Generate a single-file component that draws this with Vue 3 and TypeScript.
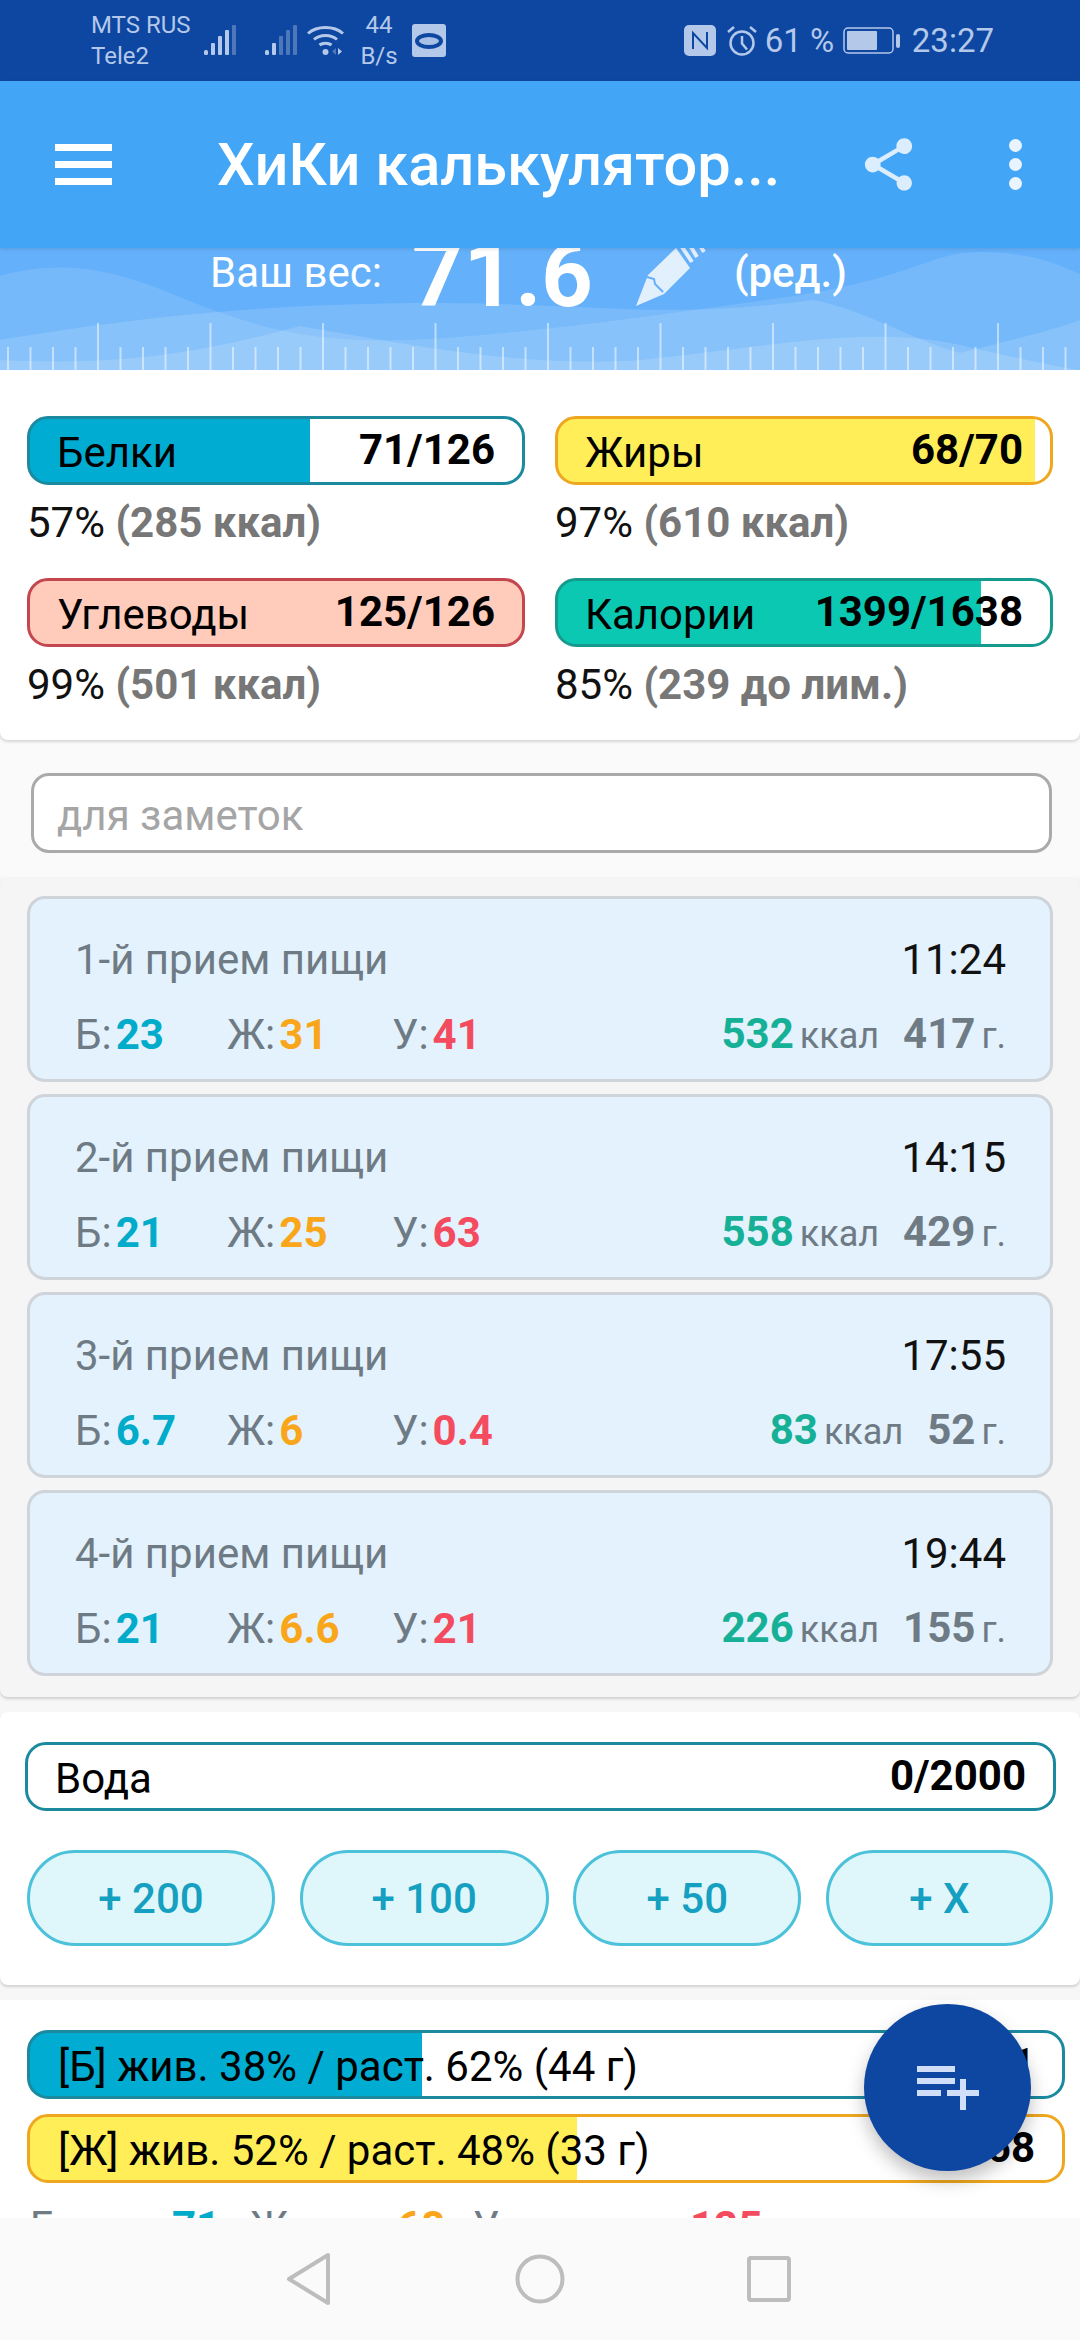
<script setup lang="ts">
interface Stat { label: string; value: string; pct: number; fill: string; border: string; note: string; detail: string }
interface Meal { title: string; time: string; b: string; f: string; c: string; kcal: string; grams: string }

const stats: Stat[] = [
  { label: 'Белки', value: '71/126', pct: 57, fill: '#00acd1', border: '#1b8a9f', note: '57%', detail: '(285 ккал)' },
  { label: 'Жиры', value: '68/70', pct: 97, fill: '#ffee58', border: '#eea71f', note: '97%', detail: '(610 ккал)' },
  { label: 'Углеводы', value: '125/126', pct: 100, fill: '#ffccbc', border: '#c4464f', note: '99%', detail: '(501 ккал)' },
  { label: 'Калории', value: '1399/1638', pct: 86, fill: '#0ac8b2', border: '#179a8e', note: '85%', detail: '(239 до лим.)' },
]
const meals: Meal[] = [
  { title: '1-й прием пищи', time: '11:24', b: '23', f: '31', c: '41', kcal: '532', grams: '417' },
  { title: '2-й прием пищи', time: '14:15', b: '21', f: '25', c: '63', kcal: '558', grams: '429' },
  { title: '3-й прием пищи', time: '17:55', b: '6.7', f: '6', c: '0.4', kcal: '83', grams: '52' },
  { title: '4-й прием пищи', time: '19:44', b: '21', f: '6.6', c: '21', kcal: '226', grams: '155' },
]
const buttons = [
  { text: '+ 200', width: 248 },
  { text: '+ 100', width: 249 },
  { text: '+ 50', width: 228 },
  { text: '+ X', width: 227 },
]
const ticks: { x: number; big: boolean }[] = []
for (let i = -4; i < 44; i++) ticks.push({ x: 98 + i * 22.5, big: ((i % 5) + 5) % 5 === 0 })

function barBg(s: { pct: number; fill: string }) {
  return `linear-gradient(to right, ${s.fill} ${s.pct}%, #fff ${s.pct}%)`
}
</script>

<template>
  <div class="page">
    <div class="status">
      <div class="carriers"><span>MTS RUS</span><span>Tele2</span></div>
      <svg class="sig" width="32" height="30" viewBox="0 0 32 30">
        <rect x="0" y="25" width="4" height="5" rx="1.5" fill="#b4c8ea"/><rect x="7" y="18" width="4" height="12" rx="1" fill="#b4c8ea"/><rect x="14" y="11" width="4" height="19" rx="1" fill="#b4c8ea"/><rect x="21" y="5" width="4" height="25" rx="1" fill="#b4c8ea"/><rect x="28" y="0" width="4" height="30" rx="1" fill="#4f78bb"/>
      </svg>
      <svg class="sig sig2" width="32" height="30" viewBox="0 0 32 30">
        <rect x="0" y="25" width="4" height="5" rx="1.5" fill="#b4c8ea"/><rect x="7" y="18" width="4" height="12" rx="1" fill="#b4c8ea"/><rect x="14" y="11" width="4" height="19" rx="1" fill="#4f78bb"/><rect x="21" y="5" width="4" height="25" rx="1" fill="#4f78bb"/><rect x="28" y="0" width="4" height="30" rx="1" fill="#4f78bb"/>
      </svg>
      <svg class="wifi" width="37" height="30" viewBox="0 0 37 30" fill="none" stroke="#b4c8ea" stroke-width="3">
        <path d="M1 8.500C10 .5 27 .5 36 8.500"/><path d="M7 14.500C13 9 24 9 30 14.500"/><path d="M12.500 20C15.500 17.500 21.500 17.500 24.500 20"/>
        <circle cx="18.500" cy="27" r="3" fill="#b4c8ea" stroke="none"/>
        <path d="M31 23v7l4-3.500z" fill="#b4c8ea" stroke="none"/><path d="M29 23v7l-4-3.500z" fill="#4f78bb" stroke="none"/>
      </svg>
      <div class="speed"><span>44</span><span>B/s</span></div>
      <svg class="eye" width="34" height="33" viewBox="0 0 34 33">
        <rect width="34" height="33" rx="3" fill="#b4c8ea"/>
        <ellipse cx="17" cy="17" rx="12" ry="6" fill="#a8bfe6" stroke="#0e47a1" stroke-width="4"/>
      </svg>
      <div class="status-right">
        <svg width="32" height="31" viewBox="0 0 32 31">
          <rect width="32" height="31" rx="5" fill="#b4c8ea"/>
          <path d="M9 24V8l14 15V7" fill="none" stroke="#0e47a1" stroke-width="2"/>
        </svg>
        <svg class="alarm" width="30" height="30" viewBox="0 0 30 30" fill="none" stroke="#b4c8ea" stroke-width="2.500">
          <circle cx="15" cy="17" r="11.500"/><path d="M15 10v7.500l5 6"/><path d="M1 6l6-5M29 6l-6-5"/>
        </svg>
        <span class="pct">61 %</span>
        <svg class="batt" width="58" height="27" viewBox="0 0 58 27">
          <rect x="1" y="1" width="49" height="25" rx="4" fill="none" stroke="#b4c8ea" stroke-width="1.500"/>
          <rect x="4" y="4" width="30" height="19" rx="1" fill="#b4c8ea"/>
          <rect x="53" y="7" width="4" height="14" rx="2" fill="#b4c8ea"/>
        </svg>
        <span class="clock">23:27</span>
      </div>
    </div>

    <div class="toolbar">
      <div class="burger"><i></i><i></i><i></i></div>
      <div class="title">ХиКи калькулятор...</div>
      <svg class="share" width="63" height="63" viewBox="0 0 24 24">
        <path fill="#dcedfd" d="M18 16.080c-.76 0-1.440.3-1.960.77L8.910 12.700c.05-.23.09-.46.09-.7s-.04-.47-.09-.7l7.050-4.110c.54.5 1.250.81 2.040.81 1.660 0 3-1.340 3-3s-1.340-3-3-3-3 1.340-3 3c0 .24.04.47.09.7L8.040 9.810C7.500 9.310 6.790 9 6 9c-1.660 0-3 1.340-3 3s1.340 3 3 3c.79 0 1.500-.31 2.040-.81l7.120 4.160c-.05.21-.08.43-.08.65 0 1.610 1.310 2.920 2.920 2.920 1.610 0 2.920-1.310 2.920-2.920s-1.310-2.920-2.920-2.920z"/>
      </svg>
      <div class="dots"><i></i><i></i><i></i></div>
    </div>

    <div class="weight">
      <svg class="waves" width="1080" height="122" viewBox="0 0 1080 122">
        <path fill="#fff" fill-opacity=".12" d="M0 28C50 14 100 16 170 45S300 95 400 92 640 70 780 50 930 2 985 4 1060 18 1080 26V122H0Z"/>
        <path fill="#fff" fill-opacity=".13" d="M0 92C120 72 260 55 430 55S660 72 813 52C860 60 920 95 960 105 1020 90 1060 80 1080 72V122H0Z"/>
        <path fill="#fff" fill-opacity=".14" d="M0 122V112C120 118 200 105 300 78 400 95 520 120 640 112 760 100 860 78 950 95 1010 108 1050 118 1080 122Z"/>
        <rect v-for="t in ticks" :key="t.x" :x="t.x - 1" :y="t.big ? 75 : 99" width="2" :height="t.big ? 47 : 23" fill="#fff" fill-opacity=".5"/>
      </svg>
      <div class="weight-row">
        <span class="w-label">Ваш вес:</span>
        <span class="w-value">71.6</span>
        <svg class="pencil" width="76" height="60" viewBox="0 0 76 60">
          <path fill="#e2effd" d="M1 59L13 28 41 1 55 21 29 47Z"/>
          <path fill="none" stroke="#64b0fa" stroke-width="2" d="M12 30l7 2 1 5 8 8"/>
          <path fill="none" stroke="#e2effd" stroke-width="4" d="M47 0l10 15M56 0l6 10M66 0l3 5"/>
        </svg>
        <span class="w-edit">(ред.)</span>
      </div>
    </div>

    <div class="content">
      <section class="summary">
        <div v-for="s in stats" :key="s.label" class="stat">
          <div class="bar" :style="{ background: barBg(s), borderColor: s.border }">
            <span class="bar-label">{{ s.label }}</span>
            <b class="bar-value">{{ s.value }}</b>
          </div>
          <div class="stat-note">{{ s.note }} <b>{{ s.detail }}</b></div>
        </div>
      </section>

      <section class="notes">
        <div class="notes-input">для заметок</div>
      </section>

      <section class="meals">
        <article v-for="m in meals" :key="m.title" class="meal">
          <div class="meal-top"><span class="meal-title">{{ m.title }}</span><span class="meal-time">{{ m.time }}</span></div>
          <div class="meal-bottom">
            <span class="macro m1">Б:<b class="c-b">{{ m.b }}</b></span>
            <span class="macro m2">Ж:<b class="c-f">{{ m.f }}</b></span>
            <span class="macro m3">У:<b class="c-c">{{ m.c }}</b></span>
            <span class="totals">
              <b class="c-k">{{ m.kcal }}</b><small>ккал</small>
              <b class="c-g">{{ m.grams }}</b><small>г.</small>
            </span>
          </div>
        </article>
      </section>

      <section class="water">
        <div class="bar water-bar"><span class="bar-label">Вода</span><b class="bar-value">0/2000</b></div>
        <div class="water-btns">
          <button v-for="b in buttons" :key="b.text" class="water-btn" :style="{ width: b.width + 'px' }">{{ b.text }}</button>
        </div>
      </section>

      <section class="ratio">
        <div class="bar wide" :style="{ background: barBg({ pct: 38, fill: '#00acd1' }), borderColor: '#1b8a9f' }">
          <span class="bar-label">[Б] жив. 38% / раст. 62% (44 г)</span><b class="bar-value">71</b>
        </div>
        <div class="bar wide" :style="{ background: barBg({ pct: 53, fill: '#ffee58' }), borderColor: '#eea71f' }">
          <span class="bar-label">[Ж] жив. 52% / раст. 48% (33 г)</span><b class="bar-value">68</b>
        </div>
        <div class="totals-row">
          <span class="tr1">Белки:</span><b class="c-b tv1">71</b>
          <span class="tr2">Жиры:</span><b class="c-f tv2">68</b>
          <span class="tr3">Углеводы:</span><b class="c-c tv3">125</b>
        </div>
      </section>
    </div>

    <div class="nav">
      <svg width="46" height="54" viewBox="0 0 46 54" fill="none" stroke="#bdbdbd" stroke-width="4" stroke-linejoin="round"><path d="M42 3v48L3 27Z"/></svg>
      <svg width="50" height="50" viewBox="0 0 50 50" fill="none" stroke="#bdbdbd" stroke-width="4"><circle cx="25" cy="25" r="22.500"/></svg>
      <svg width="44" height="46" viewBox="0 0 44 46" fill="none" stroke="#bdbdbd" stroke-width="4"><rect x="2" y="2" width="40" height="42" rx="2"/></svg>
    </div>

    <button class="fab" aria-label="add">
      <svg width="62" height="44" viewBox="0 0 62 44" fill="#d0defa">
        <rect x="0" y="0" width="38" height="6"/><rect x="0" y="12" width="38" height="6"/><rect x="0" y="24" width="24" height="6"/>
        <rect x="30" y="24" width="32" height="6"/><rect x="43" y="13" width="6" height="31"/>
      </svg>
    </button>
  </div>
</template>

<style scoped>
.page { position: relative; width: 1080px; height: 2340px; overflow: hidden; display: flex; flex-direction: column; background: #f7f7f7; font-family: Roboto, "Noto Sans", sans-serif; color: #000; }
b { font-weight: 700; }

.status { height: 81px; flex: none; background: #0e47a1; color: #b4c8ea; display: flex; align-items: center; padding-left: 91px; font-size: 24px; white-space: nowrap; }
.carriers, .speed { display: flex; flex-direction: column; line-height: 31px; }
.carriers { width: 113px; }
.sig { flex: none; margin-top: -1px; }
.sig2 { margin-left: 29px; }
.wifi { margin-left: 10px; margin-top: -1px; }
.speed { width: 32px; margin-left: 19px; align-items: center; }
.eye { margin-left: 17px; }
.status-right { margin-left: auto; padding-right: 86px; display: flex; align-items: center; }
.alarm { margin-left: 11px; }
.pct { font-size: 33px; margin-left: 8px; width: 68px; }
.batt { margin-left: 10px; }
.clock { font-size: 33px; margin-left: 11px; }

.toolbar { height: 167px; flex: none; background: #42a5f5; display: flex; align-items: center; position: relative; z-index: 2; box-shadow: 0 1px 4px rgba(0,0,0,.12); }
.burger { width: 57px; margin-left: 55px; display: flex; flex-direction: column; gap: 10px; }
.burger i { display: block; height: 7px; background: #fff; }
.title { margin-left: 105px; font-size: 59.5px; font-weight: 500; color: #fff; width: 656px; flex: none; white-space: nowrap; }
.share { margin-left: -16px; flex: none; }
.dots { margin-left: 89px; display: flex; flex-direction: column; gap: 6px; align-items: center; }
.dots i { width: 13px; height: 13px; border-radius: 50%; background: #eaf4fe; }

.weight { height: 122px; flex: none; background: #64b0fa; position: relative; overflow: hidden; }
.waves { position: absolute; left: 0; top: 0; }
.weight-row { position: relative; display: flex; align-items: flex-start; padding-left: 210px; margin-top: -19px; color: #fff; }
.w-label { font-size: 42px; line-height: 90px; flex: none; margin-top: -1px; }
.w-value { font-size: 90px; font-weight: 700; line-height: 90px; margin-left: 30px; margin-top: 2px; flex: none; }
.pencil { margin-left: 42px; margin-top: 18px; flex: none; }
.w-edit { font-size: 42px; font-weight: 500; line-height: 90px; margin-left: 23px; margin-top: -1px; flex: none; }

.content { flex: 1; min-height: 0; overflow: hidden; }
.summary { position: relative; background: #fff; height: 370px; padding: 46px 28px 0 27px; display: grid; grid-template-columns: 498px 498px; column-gap: 30px; grid-auto-rows: 162px; border-radius: 0 0 8px 8px; box-shadow: 0 2px 3px rgba(0,0,0,.14); box-sizing: border-box; }
.bar { height: 69px; box-sizing: border-box; border: 3px solid #1b8a9f; border-radius: 21px; background: #fff; display: flex; align-items: center; justify-content: space-between; padding: 0 27px; font-size: 42px; white-space: nowrap; }
.bar-label { margin-top: 4px; }
.bar-value { margin-top: -3px; }
.stat-note { margin-top: 14px; font-size: 42px; line-height: 47px; color: #111; }
.stat-note b { color: #777; }

.notes { height: 137px; padding: 33px 28px 0 31px; background: #fafafa; box-sizing: border-box; }
.notes-input { height: 80px; box-sizing: border-box; border: 3px solid #aaa; border-radius: 18px; background: #fff; font-size: 42px; color: #a5a5a5; padding-left: 23px; line-height: 79px; }

.meals { height: 820px; box-sizing: border-box; background: #f5f5f5; padding: 19px 27px 0; display: flex; flex-direction: column; gap: 12px; border-radius: 8px; box-shadow: 0 2px 3px rgba(0,0,0,.16); }
.meal { height: 186px; box-sizing: border-box; flex: none; background: #e3f2fd; border: 3px solid #cfd4da; border-radius: 18px; padding: 0 44px 0 45px; display: flex; flex-direction: column; }
.meal-top { display: flex; justify-content: space-between; margin-top: 37px; font-size: 42px; line-height: 48px; }
.meal-title { color: #6f7b84; }
.meal-time { color: #111; }
.meal-bottom { display: flex; align-items: center; margin-top: 26px; font-size: 42px; line-height: 48px; color: #6f7b84; }
.macro b { margin-left: 4px; }
.m1 { width: 152px; } .m2 { width: 165px; } .m3 { width: 120px; }
.totals { margin-left: auto; display: flex; align-items: baseline; }
.totals small { font-size: 36px; margin-left: 6px; }
.c-g { margin-left: 24px; color: #6f7b84; }
.c-b { color: #00acc9; } .c-f { color: #f9a61a; } .c-c { color: #f44b5e; } .c-k { color: #16b096; }

.water { margin-top: 15px; background: #fff; height: 273px; box-sizing: border-box; padding: 30px 27px 0; border-radius: 8px; box-shadow: 0 2px 3px rgba(0,0,0,.16); }
.water-bar { margin: 0 -3px 0 -2px; }
.water-btns { display: flex; justify-content: space-between; margin-top: 39px; }
.water-btn { height: 96px; flex: none; box-sizing: border-box; border: 3px solid #4cc1da; border-radius: 48px; background: #dff7fa; color: #159fc0; font: 500 42px Roboto, sans-serif; padding: 0; }

.ratio { margin-top: 15px; background: #fff; padding: 30px 15px 0 27px; height: 260px; box-sizing: border-box; }
.wide { margin-bottom: 15px; padding: 0 27px 0 28px; }
.totals-row { display: flex; font-size: 42px; line-height: 48px; color: #6f7b84; margin-top: 20px; padding-left: 3px; height: 48px; }
.totals-row > * { flex: none; }
.tr1 { width: 142px; } .tv1 { width: 78px; } .tr2 { width: 147px; } .tv2 { width: 76px; } .tr3 { width: 217px; }

.nav { height: 122px; flex: none; background: #fafafa; display: flex; align-items: center; position: relative; z-index: 1; padding-left: 286px; box-sizing: border-box; }
.nav svg:nth-child(2) { margin-left: 183px; }
.nav svg:nth-child(3) { margin-left: 182px; }

.fab { position: absolute; left: 864px; top: 2004px; width: 167px; height: 167px; border-radius: 50%; border: 0; padding: 0; background: #0e47a1; box-shadow: 0 9px 18px rgba(0,0,0,.25); display: flex; align-items: center; justify-content: center; z-index: 3; }
</style>
